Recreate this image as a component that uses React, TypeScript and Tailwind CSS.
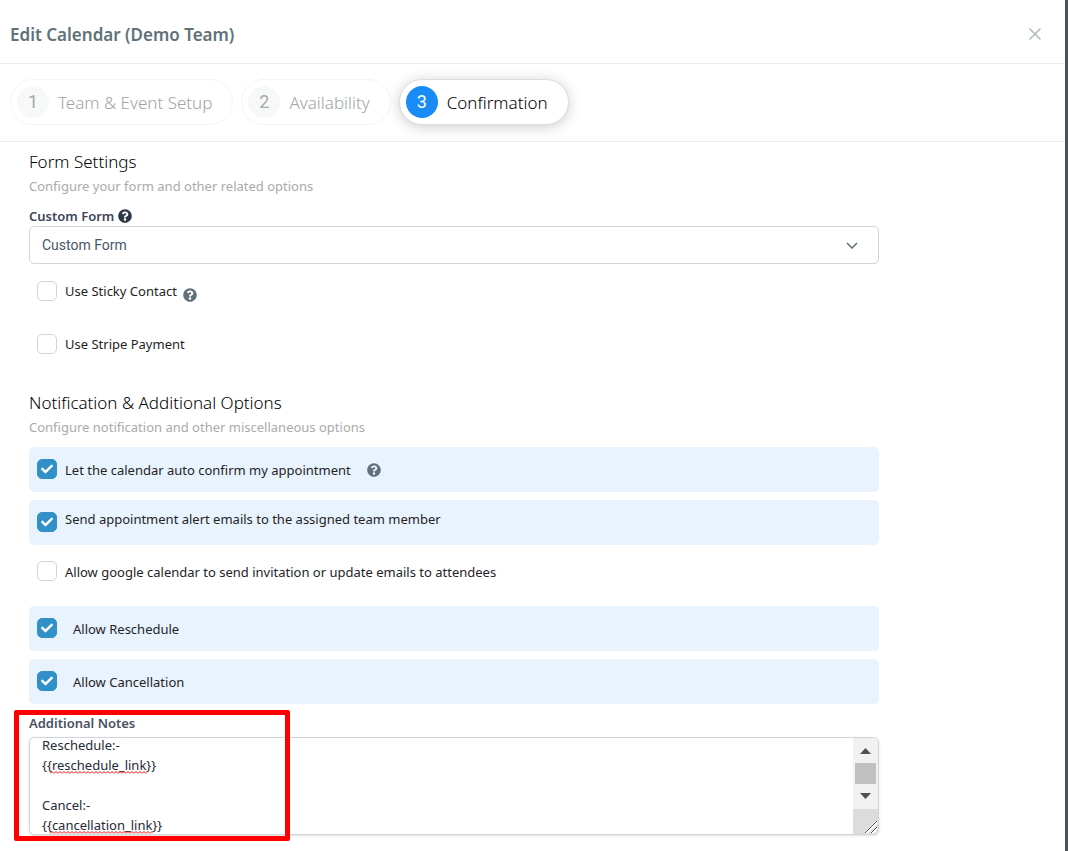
import { useEffect, useRef, useState } from "react";
import type { ReactNode } from "react";
import { FaCheck, FaQuestionCircle } from "react-icons/fa";

type Step = { n: number; label: string };

const STEPS: Step[] = [
  { n: 1, label: "Team & Event Setup" },
  { n: 2, label: "Availability" },
  { n: 3, label: "Confirmation" },
];

const NOTES = "Reschedule:-\n{{reschedule_link}}\n\nCancel:-\n{{cancellation_link}}";

function StepPill({ step, active, onClick }: { step: Step; active: boolean; onClick: () => void }) {
  return (
    <button
      type="button"
      onClick={onClick}
      className={
        "flex items-center gap-[9px] h-[46px] pl-1.5 pr-5 rounded-full border bg-white font-light text-[17px] cursor-pointer " +
        (active ? "border-[#dddddd] text-black shadow-[0_2px_14px_rgba(0,0,0,0.2)]" : "border-[#f3f4f4] text-[#a3a3a3]")
      }
    >
      <span
        className={
          "flex items-center justify-center w-8 h-8 rounded-full font-['Roboto',sans-serif] font-normal text-lg " +
          (active ? "bg-[#188bf6] text-white" : "bg-[#f7f9f9] text-[#a8a8a8]")
        }
      >
        {step.n}
      </span>
      <span className="pt-0.5">{step.label}</span>
    </button>
  );
}

function SectionTitle({ title, sub }: { title: string; sub: string }) {
  return (
    <div>
      <h2 className="text-[17px] leading-6 font-light text-black">{title}</h2>
      <p className="text-[13px] leading-6 text-[#aaaaaa]">{sub}</p>
    </div>
  );
}

type OptionProps = {
  id: string;
  label: string;
  defaultChecked?: boolean;
  labelClass?: string;
  children?: ReactNode;
};

function Option({ id, label, defaultChecked = false, labelClass = "leading-[22px]", children }: OptionProps) {
  const [checked, setChecked] = useState(defaultChecked);
  return (
    <div className={"flex items-start h-[45px] px-2 rounded-[5px] " + (checked ? "bg-[#e8f3fe] pt-3" : "pt-2")}>
      <span className="relative w-5 h-5 shrink-0">
        <input
          id={id}
          type="checkbox"
          checked={checked}
          onChange={(e) => setChecked(e.target.checked)}
          className="block appearance-none w-5 h-5 rounded-[5px] border border-[#d1d5db] bg-white checked:bg-[#3290c8] checked:border-[#3290c8] cursor-pointer"
        />
        {checked && <FaCheck size={12} className="absolute left-1 top-1 text-white pointer-events-none" />}
      </span>
      <label htmlFor={id} className={"pl-2 text-[13px] text-[#1f2326] " + labelClass}>
        {label}
      </label>
      {children}
    </div>
  );
}

// red zigzag under words the spell checker doesn't know
function Squiggle({ className }: { className: string }) {
  return (
    <svg className={"absolute pointer-events-none h-[3px] " + className} aria-hidden="true">
      <defs>
        <pattern id="squiggle" width="4" height="3" patternUnits="userSpaceOnUse">
          <path d="M0 2.5L2 0.5L4 2.5" fill="none" stroke="#f00000" strokeWidth="1" />
        </pattern>
      </defs>
      <rect width="100%" height="3" fill="url(#squiggle)" />
    </svg>
  );
}

function Notes() {
  const ref = useRef<HTMLTextAreaElement>(null);
  const [value, setValue] = useState(NOTES);

  useEffect(() => {
    if (ref.current) ref.current.scrollTop = 11;
  }, []);

  return (
    <div className="relative pt-2">
      <label htmlFor="notes" className="block text-[13px] leading-[22px] font-semibold text-[#4a5162]">
        Additional Notes
      </label>
      <div className="relative flex mt-[3px] h-[98px] rounded-[5px] border border-[#d1d5db] shadow-sm overflow-hidden">
        <textarea
          id="notes"
          ref={ref}
          spellCheck={false}
          value={value}
          onChange={(e) => setValue(e.target.value)}
          className="flex-1 px-3 py-2 text-[13px] leading-5 text-[#1f2937] resize-none outline-none [scrollbar-width:none]"
        />
        <Squiggle className="left-5 top-[33px] w-[97px]" />
        <Squiggle className="left-5 top-[93px] w-[103px]" />
        <div className="flex flex-col w-[25px] bg-[#f1f1f1]">
          <svg width="25" height="71" viewBox="0 0 25 71" aria-hidden="true">
            <path d="M7 16L12.5 10L18 16Z" fill="#505050" />
            <rect x="2" y="25" width="21" height="21" fill="#c1c1c1" />
            <path d="M7 55L12.5 61L18 55Z" fill="#505050" />
          </svg>
          <svg width="25" height="25" viewBox="0 0 25 25" aria-hidden="true" className="bg-[#dcdcdc]">
            <path d="M13 24L24 13M19 24L24 19" stroke="#ffffff" strokeWidth="3" />
            <path d="M12 24L24 12M18 24L24 18" stroke="#505050" strokeWidth="1" />
          </svg>
        </div>
      </div>
      <div className="absolute -left-[15px] -right-[5px] top-1.5 -bottom-1.5 max-w-[276px] rounded-[2px] border-5 border-[#ff0000] pointer-events-none" />
    </div>
  );
}

export default function App() {
  const [step, setStep] = useState(3);

  return (
    <div className="flex min-h-screen bg-white font-['Noto_Sans','Open_Sans',sans-serif]">
      <main className="flex-1 min-w-0">
        <header className="flex items-center justify-between h-16 pt-1 pl-[10px] pr-6 border-b border-[#ebeced]">
          <h1 className="pt-0.5 text-[17px] font-semibold text-[#607179]">Edit Calendar (Demo Team)</h1>
          <button type="button" aria-label="Close" className="cursor-pointer">
            <svg width="12" height="12" viewBox="0 0 12 12" fill="none" stroke="#afb8bc" strokeWidth="1.5">
              <path d="M0.5 0.5L11.5 11.5M11.5 0.5L0.5 11.5" />
            </svg>
          </button>
        </header>

        <nav className="flex gap-2 px-[10px] pt-[15px] pb-4 border-b border-[#ebeced]">
          {STEPS.map((s) => (
            <StepPill key={s.n} step={s} active={s.n === step} onClick={() => setStep(s.n)} />
          ))}
        </nav>

        <div className="max-w-[908px] px-[29px] pt-2">
          <SectionTitle title="Form Settings" sub="Configure your form and other related options" />

          <div className="flex items-center gap-1 mt-2 text-[#3c4557]">
            <label htmlFor="custom-form" className="text-[13px] leading-5 font-semibold">
              Custom Form
            </label>
            <FaQuestionCircle size={14} className="text-[#2d3748]" />
          </div>
          <div className="relative">
            <select
              id="custom-form"
              className="block appearance-none w-full h-[38px] px-3 rounded-[5px] border border-[#d1d5db] bg-white font-['Roboto',sans-serif] text-sm text-[#4a5568]"
            >
              <option>Custom Form</option>
            </select>
            <svg
              width="12"
              height="7"
              viewBox="0 0 12 7"
              className="absolute right-[21px] top-4 pointer-events-none"
              fill="none"
              stroke="#607179"
              strokeWidth="1.5"
            >
              <path d="M1 1L6 6L11 1" />
            </svg>
          </div>

          <div className="flex flex-col gap-2 mt-[9px] mb-5">
            <Option id="sticky" label="Use Sticky Contact" labelClass="leading-5">
              <FaQuestionCircle size={14} className="ml-1.5 mt-[7px] text-[#607179]" />
            </Option>
            <Option id="stripe" label="Use Stripe Payment" labelClass="leading-5" />
          </div>

          <SectionTitle title="Notification & Additional Options" sub="Configure notification and other miscellaneous options" />

          <div className="flex flex-col gap-2 mt-2">
            <Option id="auto-confirm" label="Let the calendar auto confirm my appointment" defaultChecked>
              <FaQuestionCircle size={14} className="ml-4 mt-1 text-[#607179]" />
            </Option>
            <Option
              id="alerts"
              label="Send appointment alert emails to the assigned team member"
              defaultChecked
              labelClass="leading-[14px]"
            />
            <Option id="google" label="Allow google calendar to send invitation or update emails to attendees" />
            <Option id="reschedule" label="Allow Reschedule" defaultChecked labelClass="ml-2 leading-[22px]" />
            <Option id="cancellation" label="Allow Cancellation" defaultChecked labelClass="ml-2 leading-[22px]" />
          </div>

          <Notes />
        </div>
      </main>
      <div className="w-[3px] shrink-0 bg-[#4c5256]" />
    </div>
  );
}
